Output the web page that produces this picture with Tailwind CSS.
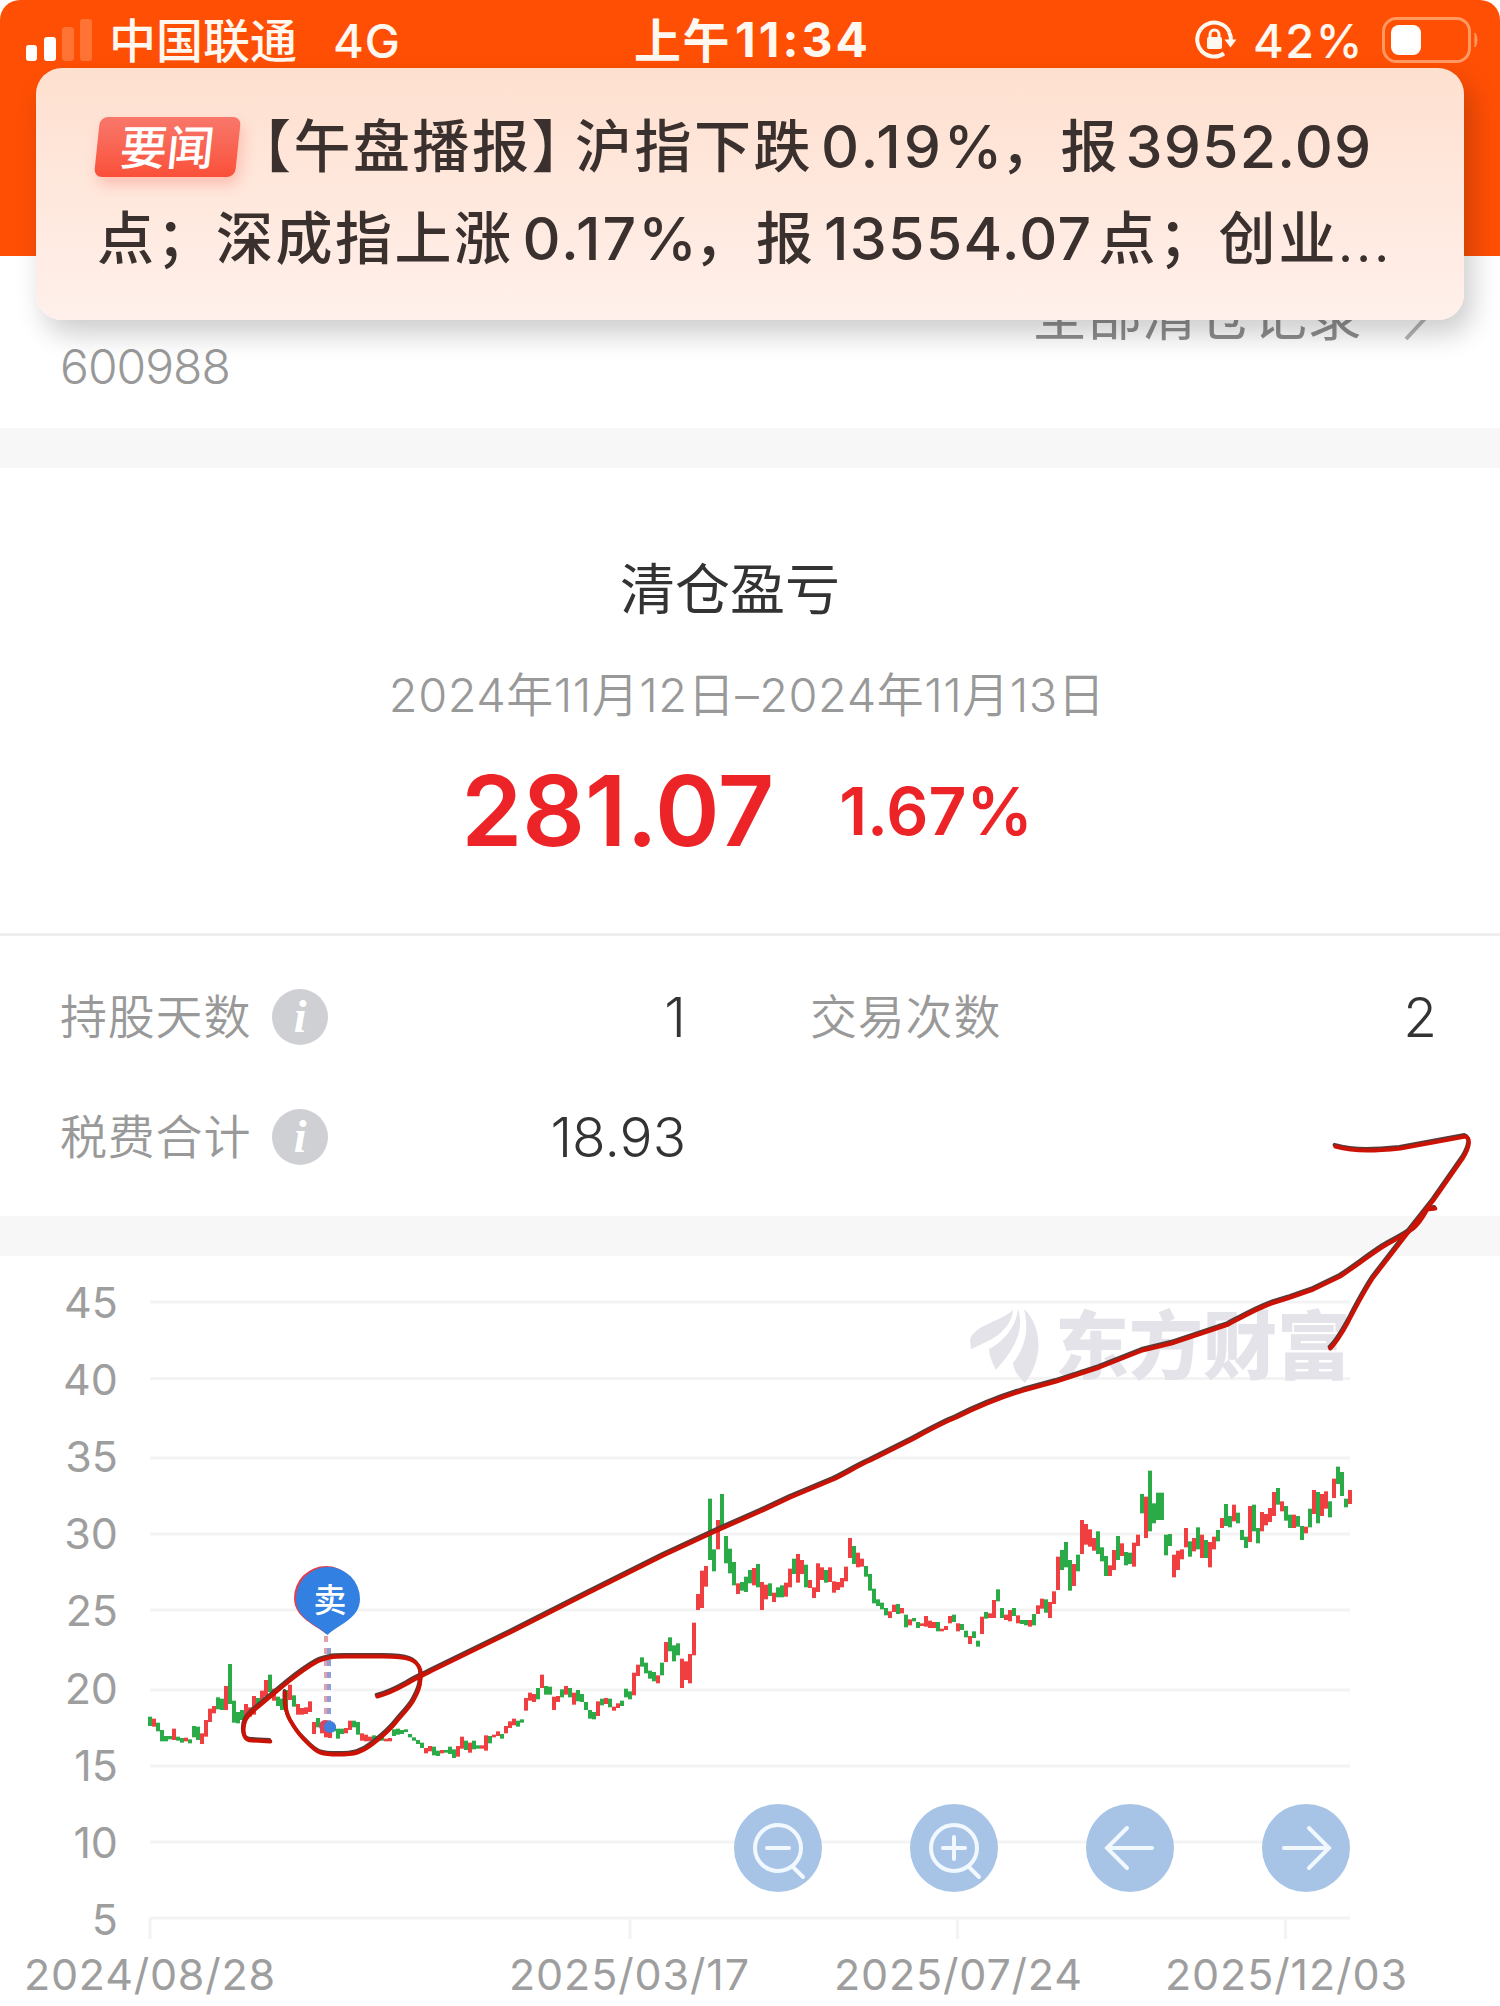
<!DOCTYPE html>
<html lang="zh-CN">
  <head>
    <meta charset="UTF-8" />
    <meta name="viewport" content="width=device-width, initial-scale=1.0" />
    <title>清仓盈亏</title>
    <script src="https://cdn.jsdelivr.net/npm/@tailwindcss/browser@4"></script>
  </head>
  <body class="bg-white">
    <div
      class="relative w-[1500px] h-[2006px] overflow-hidden bg-white font-['Inter','Noto_Sans_CJK_SC',sans-serif] text-[#333]"
    >
      <!-- Header -->
      <header class="h-64 bg-[#ff4f05] rounded-t-[20px] text-[#fff8f0]">
        <div class="flex items-center h-[68px] pt-3 pl-[25px] pr-5">
          <div class="flex-1 flex items-center">
            <svg class="w-[68px] h-11" viewBox="0 0 68 44">
              <rect x="1" y="27" width="11" height="16" rx="3" fill="#fff" />
              <rect x="19" y="19" width="12" height="24" rx="3" fill="#fff" />
              <rect x="37" y="9" width="12" height="34" rx="3" fill="#ff7434" />
              <rect x="55" y="1" width="12" height="42" rx="3" fill="#ff7434" />
            </svg>
            <span class="ml-4 text-[47px] leading-none font-medium">中国联通</span>
            <span class="ml-9 text-[47px] leading-none font-medium tracking-[1px]">4G</span>
          </div>
          <div class="text-[47px] leading-none font-bold flex items-center">
            <span class="tracking-[1.5px]">上午</span>
            <span class="ml-1 text-[48px] tracking-[3px]">11:34</span>
          </div>
          <div class="flex-1 flex items-center justify-end">
            <svg class="w-11 h-11" viewBox="0 0 44 44" fill="none">
              <path d="M31 35.500A17 17 0 1 1 36.500 14" stroke="#fff8f0" stroke-width="4" />
              <path d="M36 14a17 17 0 0 1 2 9" stroke="#fff8f0" stroke-width="4" />
              <path d="M31.500 21.500h12l-6 8z" fill="#fff8f0" />
              <rect x="14" y="19" width="15" height="12" rx="2" fill="#fff8f0" />
              <path d="M17 20v-3.500a4.500 4.500 0 0 1 9 0V20" stroke="#fff8f0" stroke-width="3" />
            </svg>
            <span class="ml-4 text-[47px] leading-none font-medium tracking-[1.5px]">42%</span>
            <svg class="ml-[18px] w-[98px] h-[46px]" viewBox="0 0 98 46" fill="none">
              <rect x="1.500" y="1.500" width="86" height="43" rx="13" stroke="#ff9a63" stroke-width="3" />
              <rect x="9" y="8" width="30" height="30" rx="8" fill="#fff" />
              <path d="M93 16q4 7 0 14z" fill="#ff9a63" stroke="#ff9a63" />
            </svg>
          </div>
        </div>
      </header>

      <!-- Stock row, partly covered by the news banner -->
      <section class="h-[172px] flex justify-between pl-[60px] pr-[66px] text-[#999]">
        <div class="pt-[87px] text-[48px] leading-none font-[350] tracking-[-1px]">600988</div>
        <div class="flex items-center h-[118px] gap-10">
          <span class="text-[55px] leading-none text-[#8e8e8e]">全部清仓记录</span>
          <svg class="w-8 h-14" viewBox="0 0 32 56" fill="none" stroke="#b5b5b5" stroke-width="4">
            <path d="M4 0l24 26L4 52" />
          </svg>
        </div>
      </section>

      <div class="h-10 bg-[#f7f7f7]"></div>

      <!-- Profit summary -->
      <section class="h-[468px] border-b-[3px] border-[#eee] flex flex-col items-center">
        <h1 class="mt-[93px] mr-[40px] text-[55px] leading-[56px]">清仓盈亏</h1>
        <div class="mt-12 mr-[6px] text-[47px] leading-[60px] text-[#999] font-[350] tracking-[0.5px] whitespace-nowrap">
          2024年11月12日–2024年11月13日
        </div>
        <div class="mt-[36px] mr-[6px] flex items-center gap-[65px] text-[#ec2427] font-semibold leading-[100px]">
          <span class="text-[98px]">281.07</span>
          <span class="text-[66px]">1.67%</span>
        </div>
      </section>

      <!-- Stats -->
      <section class="h-[280px] pt-[21px] pl-[60px] pr-[63px] grid grid-cols-[626px_1fr] content-start text-[47px]">
        <div class="h-[120px] flex items-center">
          <span class="text-[#999] font-[350] tracking-[0.8px]">持股天数</span>
          <span class="ml-[21px] size-14 rounded-full bg-[#cfd0d4] flex items-center justify-center text-white font-['Liberation_Serif',serif] italic font-bold text-[46px] leading-none">i</span>
          <span class="ml-auto text-[55px] font-[350]">1</span>
        </div>
        <div class="h-[120px] flex items-center pl-[124px]">
          <span class="text-[#999] font-[350] tracking-[0.8px]">交易次数</span>
          <span class="ml-auto text-[55px] font-[350]">2</span>
        </div>
        <div class="h-[120px] flex items-center">
          <span class="text-[#999] font-[350] tracking-[0.8px]">税费合计</span>
          <span class="ml-[21px] size-14 rounded-full bg-[#cfd0d4] flex items-center justify-center text-white font-['Liberation_Serif',serif] italic font-bold text-[46px] leading-none">i</span>
          <span class="ml-auto text-[55px] font-[350]">18.93</span>
        </div>
      </section>

      <div class="h-10 bg-[#f7f7f7]"></div>

      <!-- K-line chart -->
      <section class="h-[750px]">
        <svg class="w-[1500px] h-[750px]" viewBox="0 1256 1500 750">
          <g id="grid" stroke="#f3f3f3" stroke-width="3"></g>
          <g id="yLabels" fill="#9e9e9e" font-size="43" font-weight="400" text-anchor="end"></g>
          <g id="xLabels" fill="#9e9e9e" font-size="43" font-weight="400"></g>
          <!-- watermark -->
          <g fill="#e4e3ea">
            <path d="M970 1340C974 1325 1000 1322 1013 1310C1012 1324 1000 1336 986 1342C980 1345 974 1348 971 1349Z" />
            <path d="M1018 1309C1025 1330 1014 1350 996 1370C993 1364 990 1359 989 1349C1004 1341 1016 1327 1018 1309Z" />
            <path d="M1024 1309C1040 1324 1046 1355 1025 1383C1018 1376 1014 1371 1013 1363C1026 1347 1029 1328 1024 1309Z" />
            <text x="1055" y="1373" font-size="74" font-weight="900" textLength="296">东方财富</text>
          </g>
          <g id="candles"></g>
          <!-- sell marker -->
          <path d="M326 1636V1722" stroke="#e2a0a8" stroke-width="4" stroke-dasharray="6 6" />
          <path d="M329 1648V1722" stroke="#8f9fd4" stroke-width="4" stroke-dasharray="6 6" />
          <circle cx="325" cy="1726" r="6" fill="#d8455f" />
          <circle cx="330" cy="1727" r="6" fill="#3f7fe0" />
          <path d="M326 1634C316 1625 294 1618 294 1598a32 32 0 0 1 64 0C358 1618 336 1625 326 1634Z" fill="#e04050" />
          <path d="M327.500 1635C318 1625 296 1619 296 1599a32 32 0 0 1 64 0C360 1619 337 1625 327.500 1635Z" fill="#3280e2" />
          <text x="330" y="1612" font-size="33" font-weight="500" fill="#fff" text-anchor="middle">卖</text>
          <!-- chart controls -->
          <g fill="#a4c2e5" fill-opacity=".97">
            <circle cx="778" cy="1848" r="44" />
            <circle cx="954" cy="1848" r="44" />
            <circle cx="1130" cy="1848" r="44" />
            <circle cx="1306" cy="1848" r="44" />
          </g>
          <g fill="none" stroke="#f1f8ff" stroke-width="4" stroke-linecap="round">
            <circle cx="778" cy="1848" r="23" />
            <path d="M793 1867l10 10M767 1848h22" />
            <circle cx="954" cy="1848" r="23" />
            <path d="M969 1867l10 10M943 1848h22M954 1837v22" />
            <path d="M1152 1848h-45M1127 1828l-20 20 20 20" />
            <path d="M1284 1848h45M1309 1828l20 20-20 20" />
          </g>
        </svg>
      </section>

      <!-- News banner -->
      <div
        class="absolute left-9 top-[68px] w-[1428px] h-[252px] rounded-[26px] bg-linear-to-b from-[#fee0cf] to-[#fff0eb] shadow-[8px_14px_28px_rgba(0,0,0,0.2)] pl-[61px] pt-[33px] text-[57px] leading-[92px] font-medium text-[#3a302e] whitespace-nowrap"
      >
        <div class="flex items-center h-[92px]">
          <span
            class="w-[141px] h-[60px] -skew-x-6 rounded-lg bg-linear-to-b from-[#f8776a] to-[#fa4f38] shadow-[4px_8px_14px_rgba(250,80,60,0.25)] flex items-center justify-center text-[47px] leading-none text-white"
            >要闻</span
          >
          <span class="-ml-1 tracking-[2.5px]">【午盘播报】</span>
          <span class="-ml-4 tracking-[2.5px]">沪指下跌</span>
          <span class="ml-[8px] text-[59px] tracking-[3px]">0.19%</span>
          <span class="-ml-[5px]">，</span>
          <span class="ml-[3px]">报</span>
          <span class="ml-2 text-[59px] tracking-[1.2px]">3952.09</span>
        </div>
        <div class="flex items-center h-[92px]">
          <span class="tracking-[2.5px]">点；深成指上涨</span>
          <span class="ml-[9px] text-[59px] tracking-[2.1px]">0.17%</span>
          <span class="-ml-[5px]">，</span>
          <span class="ml-[5px]">报</span>
          <span class="ml-[11px] text-[59px] tracking-[1.3px]">13554.07</span>
          <span class="ml-[6px] tracking-[3px]">点；创业</span>
          <span class="-ml-[2px] text-[64px] font-light">…</span>
        </div>
      </div>

      <!-- Hand-drawn marks: dark edge with the red stroke over it -->
      <svg class="absolute left-0 top-0 w-[1500px] h-[2006px] pointer-events-none" viewBox="0 0 1500 2006">
        <defs>
          <g id="marks" fill="none" stroke-linecap="round" stroke-linejoin="round">
            <path d="M285 1692C284 1708 287 1715 290 1720C294 1727 299 1734 303 1738C309 1744 314 1750 320 1752C326 1754 331 1754 337 1754C344 1754 351 1754 357 1752C363 1750 368 1747 373 1743C382 1736 391 1728 397 1720C403 1713 409 1707 413 1700C417 1693 420 1686 420 1680C421 1675 421 1671 419 1667C417 1663 415 1661 410 1659C402 1656 393 1656 383 1656L345 1656C340 1656 334 1656 330 1657C325 1658 321 1659 317 1661C306 1667 297 1674 287 1682L257 1707C252 1711 247 1715 245 1720C243 1725 243 1731 244 1735C245 1738 248 1740 252 1740L270 1741" />
            <path d="M377 1696C389 1693 398 1688 407 1683C416 1677 425 1674 430 1671L510 1632L587 1593L663 1555L717 1530L760 1511L790 1497L833 1479C846 1473 858 1465 870 1460L910 1440C925 1432 941 1423 956 1417C978 1406 1000 1397 1023 1390L1056 1381L1099 1367L1142 1350L1171 1343L1228 1324C1243 1316 1257 1308 1271 1303L1290 1297L1313 1289L1340 1276C1355 1266 1369 1255 1383 1246C1393 1240 1404 1235 1413 1228C1420 1222 1423 1216 1427 1209L1435 1208" />
            <path d="M1335 1146C1346 1149 1356 1150 1367 1150C1379 1150 1390 1149 1400 1148C1422 1144 1444 1140 1465 1136C1471 1138 1469 1147 1463 1157L1433 1200L1407 1233L1373 1277C1363 1292 1355 1308 1347 1323C1342 1332 1337 1341 1330 1348" />
          </g>
        </defs>
        <use href="#marks" stroke="#5a3a36" stroke-width="3.500" transform="translate(-.6 -1.200)" />
        <use href="#marks" stroke="#cc1204" stroke-width="4" transform="translate(.3 .5)" />
      </svg>
    </div>

    <script>
      const NS = "http://www.w3.org/2000/svg";

      function add(parent, tag, attrs, text) {
        const el = document.createElementNS(NS, tag);
        for (const key in attrs) el.setAttribute(key, attrs[key]);
        if (text) el.textContent = text;
        document.getElementById(parent).appendChild(el);
      }

      // price axis
      const rows = [
        [45, 1302], [40, 1378.5], [35, 1458], [30, 1534], [25, 1610],
        [20, 1690], [15, 1766], [10, 1842], [5, 1918],
      ];
      rows.forEach(([price, y], i) => {
        add("grid", "path", { d: `M150 ${y}H1350` });
        add("yLabels", "text", { x: 118, y: 1317.5 + i * 77.2 }, String(price));
      });

      // date axis
      [150, 630, 957.5, 1285.5].forEach((x) => {
        add("grid", "path", { d: `M${x} 1918v21` });
      });
      [
        [24, 251, "2024/08/28"],
        [509, 240, "2025/03/17"],
        [834, 248, "2025/07/24"],
        [1165, 242, "2025/12/03"],
      ].forEach(([x, w, label]) => {
        add("xLabels", "text", { x, y: 1990, textLength: w }, label);
      });

      // one bar every 4px, high and low in thirds of a pixel below the group's top
      const groups = [
        [0, 1520, "g590-618 r596-620 g608-634 g630-664 g648-664 g648-658 r626-660 g650-662 g654-668 r653-664 g658-670 g618-652 g620-660 r640-672 r600-650 r566-606 r558-580 g532-568 g536-570 r498-570 g432-552 g542-608 g576-610 g570-600 r552-590 r562-590 r528-584 g534-556 r512-540 r480-530 g464-516 r506-542 g530-558 g536-570 g510-560 r494-540 g526-560 r552-584 r564-584 r562-582 r544-576 r606-642 g594-622 r612-640 r606-652 r620-654 g616-634 g626-656 g626-642 r624-640 r602-630 g602-622 g606-644 r640-662 r644-664 r650-664 g646-664 r648-660 g650-662 r656-664 r654-664 g628-648 g626-644 g630-642 g628-636 g642-652 g652-662 g660-672 g668-684 r684-700 r678-694 g680-706 g692-708 r690-700 g690-698 g680-702 g688-714"],
        [77, 1460, "r858-890 r830-866 g842-870 r848-878 g842-868 g856-866 r856-866 r826-872 g828-850 r824-832 r814-828 g822-836 r798-820 r784-804 r776-796 g782-800 g778-788 r714-752 r698-722 r702-726 g684-718 r644-684 g678-704 g680-704 r710-750 r708-726 g688-712 r678-704 g684-712 r698-734 g690-724 g702-726 g726-750 g750-776 g756-778 r724-768 g716-736 r714-732 g716-742 r740-752 r730-744 g722-738 g686-712 g694-718 r638-706 r614-648 g592-620 g608-640 g632-656 g636-664 r646-670 g608-646 r546-606 g532-574 g556-604 g550-586 r596-684 r604-660 r582-670 r488-586 r402-450 r332-444 r318-380 g116-300 g268-334 r180-268 g102-204 g228-310 g266-340 g306-376 r370-402 g366-392"],
        [149, 1460, "g350-396 g330-370 r324-376 g312-382 r366-450 r374-418 g370-408 r398-426 g382-412 g376-412 r368-410 r326-382 g296-342 r282-368 r300-342 g314-382 r360-384 r382-414 r310-396 r322-360 g330-368 r322-366 r364-398 r366-390 r354-382 r320-364 r234-294 g258-312 r278-322 r296-320 g318-350 g342-392 g386-430 g418-438 g428-448 g444-466 r454-474 r434-456 g432-462 r444-460 g464-502 r478-496 g474-484 g486-504 r490-498 r468-500 r482-504 r486-504 g486-514 r506-514 r498-510 r468-490 g464-486 r490-514 g492-510 g512-532 r528-552 g514-534 g542-560 r470-522 g456-476 r460-474 r420-474 g388-424 g444-474 r464-480 r450-484 g444-468 r466-490 g480-492 g480-496 r480-500 g462-496 r436-462 r416-446 g418-458 r426-474 r394-432 r290-390 g270-330 g246-322 g300-392"],
        [231, 1440, "r372-438 g344-394 r240-342 r252-314 r268-320 r294-332 g274-342 g322-364 g348-408 r376-408 r330-390 g288-360 r310-348 g336-376 g338-372 r308-380 r284-318 g162-220 r170-294 g92-274 g190-250 g158-240 g158-240 g284-346 g282-318 r344-412 r332-390 r328-358 r264-322 g304-350 r294-334 g262-328 r284-354 g300-354 r306-382 r290-328 g270-304 r234-264 g192-258 g228-262 r194-244 g218-250 g270-300 g290-324 r198-306 g194-274 g264-310 r216-274 r222-256 r204-246 r156-228 g144-194 r184-214 g198-242 g224-264 r224-264 g228-260 g258-300 r260-280 g206-262 r150-222 g156-250 r162-228 r154-206 g184-232 r116-174 g80-132 g96-168 g176-202 r150-192"],
      ];
      groups.forEach(([start, top, bars]) => {
        bars.split(" ").forEach((bar, i) => {
          const [high, low] = bar.slice(1).split("-").map(Number);
          add("candles", "rect", {
            x: 148 + (start + i) * 4,
            y: top + high / 3,
            width: 4,
            height: (low - high) / 3,
            fill: bar[0] === "g" ? "#2bab47" : "#ef3f40",
          });
        });
      });
    </script>
  </body>
</html>
